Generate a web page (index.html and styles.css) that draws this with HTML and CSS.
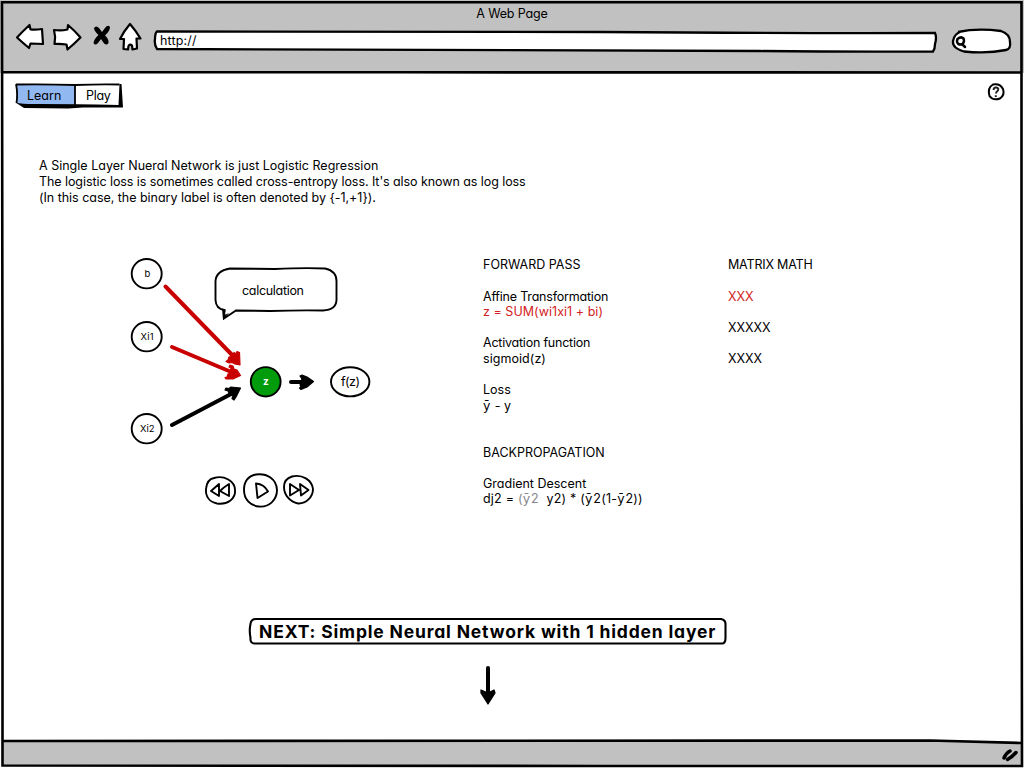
FILE: index.html
```html
<!DOCTYPE html>
<html lang="en">
<head>
<meta charset="utf-8">
<title>A Web Page</title>
<link rel="stylesheet" href="styles.css">
</head>
<body>
<div class="window">
  <header class="chrome">
    <div class="title">A Web Page</div>
    <div class="toolbar">
      <svg class="nav-icons" width="132" height="34" viewBox="12 20 132 34">
        <g fill="#fff" stroke="#000" stroke-width="2.2" stroke-linejoin="round">
          <path d="M17 37.5Q23 31 29.5 25L30.5 29.5Q36 30 42 29L43 44Q37 43.500 30.500 43.500L29 48Q23 43 17 37.500Z"/>
          <path d="M54 30Q61 31 67.500 29.500L68 25Q75 31 80.500 37.500Q74 44 67.500 49.500L66.500 44.500Q60 43.500 54.500 44Q56 37 54 30Z"/>
          <path d="M130 24Q136 31 140.500 38.500L136.500 38.500L137 48.500L132.500 49.500L132 45.500Q130 43.500 128.500 46L128 49.500L123.500 49L124 39L120 39Q124 31 130 24Z"/>
        </g>
        <path d="M94 28Q96 25 99 28L102 32L105 28Q108 24 110 27Q110 31 105 35.500Q109 39 108.500 43Q106 46.500 103 42L101 39L98 43Q95 46 93.500 43Q94 39 98.500 35Q94 31 94 28Z"/>
      </svg>
      <div class="address">
        <svg class="backing" width="784" height="22" viewBox="153 30 784 22"><path d="M157 31.500Q500 32.500 600 32Q800 33.500 935 33Q937 37 935 44Q935 49 933 51.500Q850 52 760 51Q500 50 157 49Q154 44 155 39Q155 33 157 31.500Z" fill="#fff" stroke="#000" stroke-width="2.300"/></svg>
        <span class="text url">http://</span>
      </div>
      <svg class="search" width="62" height="28" viewBox="950 27 62 28">
        <path d="M958 32Q977 28 1001 31Q1010 34 1010 42Q1011 49 1006 50Q987 54 964 51.500Q952 48 953 41Q954 34 961 31.500" fill="#fff" stroke="#000" stroke-width="2.300"/>
        <path d="M957.500 39Q961 36 963.500 38.500Q965 42 962 44.500Q957 45 957 41ZM962 44L965 47" fill="none" stroke="#000" stroke-width="2.500" stroke-linecap="round"/>
      </svg>
    </div>
  </header>

  <main class="page">
    <nav class="menu">
      <div class="tabs">
        <svg class="backing" width="110" height="28" viewBox="14 82 110 28">
          <path d="M16 84.500Q70 86 119.500 84.500L120 106L22 106L17 104Z" fill="#fff"/>
          <path d="M16 84.500L75 85.500L75 105L20 105L16.500 103Z" fill="#92b8f2"/>
          <path d="M16 84.500Q45 84 75 85Q100 84 119.500 84.500M16 84Q18 94 16.500 103M75 85V106" fill="none" stroke="#000" stroke-width="1.800"/>
          <path d="M15.500 102.500Q24 104.500 40 104Q75 104 118.500 105L119.500 84L121.500 84L123 107.500L83 107.500L68 108.500L24 108Z" fill="#000"/>
        </svg>
        <span class="text learn">Learn</span><span class="text play">Play</span>
      </div>
      <svg class="help" width="18" height="18" viewBox="987 83 18 18">
        <path d="M993 84.500Q1000 83 1003 89Q1005 95 1000 98.500Q993 101 989.500 96Q987 88 993 84.500Z" fill="#fff" stroke="#000" stroke-width="2"/>
        <path d="M993.500 90Q994 87 996.500 87.500Q999.500 88.500 997.500 91Q996 92 996 93.500M995.800 95.200V97" fill="none" stroke="#222" stroke-width="2"/>
      </svg>
    </nav>

    <section class="intro">
      <div class="text i1">A Single Layer Nueral Network is just Logistic Regression</div>
      <div class="text i2">The logistic loss is sometimes called cross-entropy loss. It's also known as log loss</div>
      <div class="text i3">(In this case, the binary label is often denoted by {-1,+1}).</div>
    </section>

    <section class="lesson">
      <svg class="diagram" width="260" height="260" viewBox="120 255 260 260">
        <g fill="#fff" stroke="#000" stroke-width="1.900">
          <ellipse cx="146.700" cy="273.700" rx="15" ry="14.700"/>
          <ellipse cx="146.700" cy="336.700" rx="15" ry="14.700"/>
          <ellipse cx="146.700" cy="428.700" rx="15" ry="14.700"/>
          <ellipse cx="265.700" cy="381.800" rx="14.900" ry="14.700" fill="#029b0b"/>
          <ellipse cx="350.200" cy="381.800" rx="19.200" ry="14.600"/>
          <path d="M230 268.500L275 269Q305 267.500 325 268.500Q336.500 271 336.500 281V300Q336 310 323 310.500Q300 310 270 311L236 310.500L224 318.500L224.500 310Q216 309 215.500 300V281Q216 271 230 268.500Z"/>
        </g>
        <path d="M222 308.500L225.500 310L224.500 315L229 313L223 320Z"/>
        <g fill="none" stroke="#c90000" stroke-width="4" stroke-linecap="round">
          <path d="M165.500 286.500L237 360M172 347L236 374"/>
        </g>
        <g fill="#c90000" stroke="#c90000" stroke-width="1.200" stroke-linejoin="round">
          <path d="M240 365L239.500 352.500L237 351.500L236 354L234 352.500L232 356L229 357L228 360L226 361.500L229 363L232 362.500L235 364Z"/>
          <path d="M240.500 375.500L237 370L234 369L233 366L230 365L229 367L231 368L230 371L231 373L228 374L227 377L225 377.500L226 379L233 379Z"/>
        </g>
        <g stroke="#000" stroke-width="4" stroke-linecap="round"><path d="M172 425L233 393M291 382H306"/></g>
        <g stroke="#000" stroke-width="1.200" stroke-linejoin="round">
          <path d="M240.500 388L231 387L229 388.500L226 388L225 390L228 391L230 395L233 396L232 398.500L234 400L236 397Z"/>
          <path d="M313.500 381.500L307 377L302 375L300 376L302 379L301 381L303 382L300 385L301 387L299.500 388L301 389.500L307 387Z"/>
        </g>
        <g class="label">
          <text x="144.500" y="276.500" font-size="9.500" textLength="5">b</text>
          <text x="140.500" y="339.500" font-size="9.500" textLength="13">Xi1</text>
          <text x="140" y="431.500" font-size="9.500" textLength="14.500">Xi2</text>
          <text x="263" y="385" font-size="10" font-weight="700" fill="#fff" textLength="5.500">z</text>
          <text x="341" y="386" font-size="12.500" textLength="19">f(z)</text>
          <text x="242" y="295" font-size="12.500" textLength="62">calculation</text>
        </g>
        <g fill="#fff" stroke="#000" stroke-width="1.900" stroke-linejoin="round">
          <path d="M214 478C224 475 235 481 235 490C236 499 227 505 217 503.500C209 502 205.500 496 206 489C206.500 483 209 479 214 478Z"/>
          <path d="M256 474.500C267 473 276.500 479 277 490C277 500 269 507.500 259 506.500C250 506 244 499 244 490C244 481 249 476 256 474.500Z"/>
          <path d="M292 476.500C302 474 312 480 313 489C313 497 306 504 298 503.500C290 502 284 495 284 487C284 481 287 478 292 476.500Z"/>
          <path d="M219 484L211 491L219 496ZM229 484Q224 487 220 491L229 496Z"/>
          <path d="M256 483.500Q264 484 268 491.500L257.500 498Z"/>
          <path d="M290 484V495.500L299 490ZM300 484L301 495.500L308.500 490Z"/>
        </g>
      </svg>

      <div class="steps">
        <div class="text">FORWARD PASS</div>
        <div class="text gap affine">Affine Transformation</div>
        <div class="text red formula">z = SUM(wi1xi1 + bi)</div>
        <div class="text gap activation">Activation function</div>
        <div class="text sigmoid">sigmoid(z)</div>
        <div class="text gap loss">Loss</div>
        <div class="text estimate"><span class="bar">ȳ</span> - y</div>
        <div class="text gap-wide">BACKPROPAGATION</div>
        <div class="text gap">Gradient Descent</div>
        <div class="text dj"><span>dj2 = </span><span class="muted">(<span class="bar">ȳ</span>2</span><span class="after"> y2) * (<span class="bar">ȳ</span>2(1-<span class="bar">ȳ</span>2))</span></div>
      </div>

      <div class="matrix">
        <div class="text mm">MATRIX MATH</div>
        <div class="text gap red">XXX</div>
        <div class="text gap">XXXXX</div>
        <div class="text gap">XXXX</div>
      </div>
    </section>

    <section class="next">
      <div class="next-button">
        <svg class="backing" width="480" height="28" viewBox="248 617 480 28"><path d="M256 619Q500 620 721 619Q726 620 725.500 625V638Q725.500 643.500 722 643.500Q550 643 400 643.500H254Q250 643 250.500 638Q249 630 250.500 624Q251 619 256 619Z" fill="#fff" stroke="#000" stroke-width="2.100"/></svg>
        <span class="text cta">NEXT: Simple Neural Network with 1 hidden layer</span>
      </div>
      <svg class="down" width="20" height="42" viewBox="478 664 20 42">
        <path d="M488 668V698" stroke="#000" stroke-width="4" stroke-linecap="round"/>
        <path d="M488 704L495 693L494 690L488 693L481 690L481 693Z" stroke="#000" stroke-width="1.300" stroke-linejoin="round"/>
      </svg>
    </section>
  </main>

  <svg class="frame" width="1024" height="768" viewBox="0 0 1024 768">
    <path d="M3 741Q500 740 930 740.500Q980 742 1021 743V766H3Z" fill="#c1c1c1"/>
    <g fill="none" stroke="#000" stroke-width="2.600">
      <path d="M2 2.200H1021.500V400L1022 766H600L2.500 765.500V400Z"/>
      <path d="M2 72.300H400Q700 73.500 1022 72.500M2 741Q400 740 930 740.500Q980 742 1022 743"/>
    </g>
    <path d="M1004 758Q1006 753 1010 751M1007.500 759.500Q1012 757 1016 752.500" fill="none" stroke="#000" stroke-width="3.500" stroke-linecap="round"/>
  </svg>
</div>
</body>
</html>
```
FILE: styles.css
```css
* { box-sizing: border-box; }
body { margin: 0; background: #fff; color: #000; font: 440 12.5px Inter, "Noto Sans", sans-serif; font-feature-settings: "cv11"; }
svg { display: block; overflow: visible; }
.window { position: relative; width: 1024px; height: 768px; overflow: hidden; display: flex; flex-direction: column; }
.frame { position: absolute; inset: 0; pointer-events: none; }
.text { white-space: pre; }
.backing { position: absolute; left: 0; top: 0; z-index: -1; }
.chrome { height: 73px; background: #c1c1c1; padding-top: 6px; position: relative; z-index: 0; }
.title { height: 14px; line-height: 15px; text-align: center; letter-spacing: -.15px; }
.toolbar { display: flex; padding-left: 12px; align-items: flex-start; }
.address { position: relative; width: 784px; height: 22px; margin: 10px 13px 0 9px; padding-left: 7px; line-height: 22px; letter-spacing: .15px; }
.search { margin-top: 7px; }
.page { flex: 1; display: flex; flex-direction: column; position: relative; z-index: 0; }
.menu { display: flex; justify-content: space-between; padding: 9px 19px 0 14px; height: 85px; }
.tabs { position: relative; width: 110px; height: 28px; display: flex; line-height: 27px; }
.learn { width: 61px; padding-left: 13px; }
.play { padding-left: 11px; letter-spacing: -.3px; }
.help { margin-top: 1px; }
.intro { height: 97px; padding-left: 39px; line-height: 16px; }
.i1 { letter-spacing: .01px; }
.i2 { letter-spacing: -.07px; }
.i3 { letter-spacing: -.03px; }
.lesson { display: flex; padding-left: 120px; height: 362px; line-height: 15.65px; }
.label { font-family: Inter, sans-serif; font-weight: 440; }
.steps { width: 245px; margin-left: 103px; padding-top: 2.3px; }
.matrix { padding-top: 2.3px; }
.mm { letter-spacing: -.18px; }
.affine { letter-spacing: -.2px; }
.gap { margin-top: 15.65px; }
.gap-wide { margin-top: 31.3px; }
.activation { letter-spacing: -.22px; margin-top: 15.15px; }
.formula { letter-spacing: .04px; }
.sigmoid { letter-spacing: .05px; margin-top: .5px; }
.loss { margin-top: 15.15px; }
.estimate { margin-top: .5px; }
.dj { letter-spacing: .22px; margin-top: -.6px; }
.red { color: #d22323; }
.muted { color: #85858c; }
.bar { font-family: "DejaVu Sans", sans-serif; font-size: 12.5px; line-height: 1; letter-spacing: .8px; }
.after { padding-left: 4px; }
.next { display: flex; flex-direction: column; padding-left: 248px; }
.next-button { position: relative; width: 480px; height: 28px; line-height: 29px; padding-left: 11px; }
.cta { font-size: 17.5px; font-weight: 700; letter-spacing: .83px; }
.down { margin: 19px 0 0 230px; }
```
